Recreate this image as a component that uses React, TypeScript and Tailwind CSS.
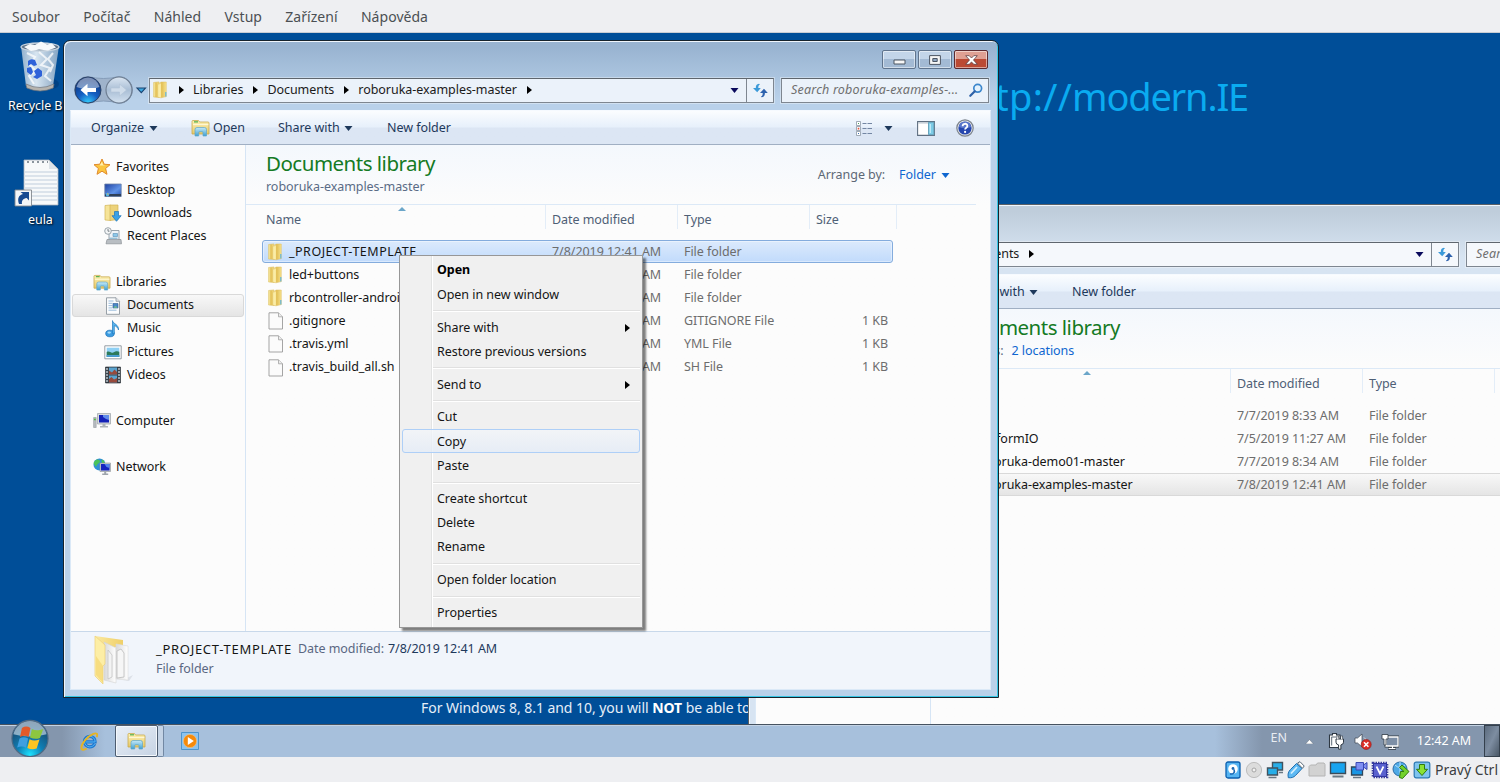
import React from "react";

type P = { className?: string };

const FolderIcon = ({ className = "w-[18px] h-[18px]" }: P) => (
  <svg viewBox="0 0 18 18" className={"shrink-0 " + className}>
    <defs>
      <linearGradient id="fo" x1="0" x2="1">
        <stop offset="0" stopColor="#fdf3b4" />
        <stop offset=".45" stopColor="#e2bf55" />
        <stop offset="1" stopColor="#f7e28d" />
      </linearGradient>
    </defs>
    <path d="M1.500 1.500 7 .9v15.600l-5.500-.5z" fill="url(#fo)" stroke="#d9ba58" strokeWidth=".5" />
    <path d="M6 3.200 9 1h5.300v14.600L9 16.800l-3-.6z" fill="url(#fo)" stroke="#dcbd60" strokeWidth=".5" />
    <path d="M9 2.500 9 16.400l-2.500-.6V4z" fill="#fff3b0" opacity=".7" />
    <path d="M13.800 11v4.600" stroke="#62b4dc" strokeWidth="1.200" />
  </svg>
);

const LibraryIcon = ({ className = "w-[19px] h-[18px]" }: P) => (
  <svg viewBox="0 0 19 18" className={"shrink-0 " + className}>
    <defs>
      <linearGradient id="li" x1="0" y1="0" x2="0" y2="1">
        <stop offset="0" stopColor="#fdf2b6" />
        <stop offset="1" stopColor="#e6c766" />
      </linearGradient>
      <linearGradient id="lb" x1="0" y1="0" x2="0" y2="1">
        <stop offset="0" stopColor="#c5e9f7" />
        <stop offset="1" stopColor="#3fa0d2" />
      </linearGradient>
    </defs>
    <path d="M1 3.500V2.300Q1 1.500 2 1.500h5.500l1 1.500H17q1 0 1 1v11H1z" fill="url(#li)" stroke="#c9a94e" strokeWidth=".8" />
    <path d="M3 2.800h4" stroke="#4fae4a" strokeWidth="1.200" />
    <path d="M2 5.600h15.400" stroke="#fffbe0" strokeWidth=".9" />
    <path d="M4 17v-6.500Q4 8.500 6 8.500h7.500q2 0 2 2V17H12v-3.300q0-1-1-1H8.700q-1 0-1 1V17z" fill="url(#lb)" stroke="#5fa6c9" strokeWidth=".7" />
  </svg>
);

const FileIcon = () => (
  <svg viewBox="0 0 18 18" className="w-[18px] h-[18px] shrink-0">
    <path d="M2 .8h9.500L15.500 4.800V17H2z" fill="#fbfbfb" stroke="#9b9b9b" strokeWidth=".9" />
    <path d="M11.500.8v4h4" fill="#ececec" stroke="#a2a2a2" strokeWidth=".8" />
  </svg>
);

const StarIcon = () => (
  <svg viewBox="0 0 18 18" className="w-[18px] h-[18px] shrink-0">
    <path d="M9 1l2.200 5.200 5.800.5-4.400 3.800 1.400 5.800L9 13.200 4 16.300l1.400-5.800L1 6.700l5.800-.5z" fill="#fbc540" stroke="#e08a2c" strokeWidth="1" strokeLinejoin="round" />
    <path d="M9 3.800l1.200 3.200 2.600.4H6.500z" fill="#fff0b0" />
  </svg>
);

const DesktopIcon = () => (
  <svg viewBox="0 0 18 18" className="w-[18px] h-[18px] shrink-0">
    <defs>
      <linearGradient id="de" x1="0" y1="0" x2="1" y2="1">
        <stop offset="0" stopColor="#1d3fa0" />
        <stop offset=".6" stopColor="#5f92e6" />
        <stop offset="1" stopColor="#2450b0" />
      </linearGradient>
    </defs>
    <path d="M.8 3h16.400v12.500H.8z" fill="url(#de)" stroke="#6e83a6" strokeWidth=".8" />
    <path d="M1 13h16v2.300H1z" fill="#2f4057" />
    <circle cx="3.500" cy="13.600" r="1.800" fill="#4fb3e8" />
    <path d="M3 12.600h1.500v1H3z" fill="#f2a33a" />
  </svg>
);

const DownloadsIcon = () => (
  <svg viewBox="0 0 18 18" className="w-[18px] h-[18px] shrink-0">
    <path d="M1 1.500 6.500 1v15.500L1 16z" fill="#f6e498" stroke="#d3b558" strokeWidth=".7" />
    <path d="M6 1h8v14.500l-8 1z" fill="#ecd27a" stroke="#d3b558" strokeWidth=".7" />
    <path d="M10.500 7.500h4v4.200h2.700L12.500 17.300 8 11.700h2.500z" fill="#3aa0e6" stroke="#1c74b8" strokeWidth=".7" />
  </svg>
);

const RecentIcon = () => (
  <svg viewBox="0 0 18 18" className="w-[18px] h-[18px] shrink-0">
    <path d="M5 3.500h10v10H5z" fill="#eef3f7" stroke="#8f9aa3" strokeWidth=".9" />
    <path d="M9 6.500h4.500v3H9z" fill="#8cc8ea" stroke="#5a90b5" strokeWidth=".6" />
    <path d="M3 12.500h14l.5 4.300H2z" fill="#b9bec3" stroke="#8b9196" strokeWidth=".7" />
    <path d="M5.500 11.200h8" stroke="#6fa8c9" strokeWidth="1" />
    <circle cx="4" cy="4" r="3.300" fill="#f4f6f7" stroke="#929ca4" strokeWidth=".9" />
    <path d="M4 2v2.200h1.500" stroke="#5b666e" strokeWidth=".8" fill="none" />
  </svg>
);

const DocumentsIcon = () => (
  <svg viewBox="0 0 18 18" className="w-[18px] h-[18px] shrink-0">
    <path d="M2.500.8h9.500l3.500 3.500v13h-13z" fill="#fbfcfd" stroke="#8d969e" strokeWidth=".9" />
    <path d="M12 .8v3.500h3.500" fill="#e2e8ec" stroke="#8d969e" strokeWidth=".8" />
    <path d="M4.500 4h5M4.500 6.300h4M4.500 8.600h4M4.500 10.900h4M4.500 13.200h8" stroke="#8fb4d8" strokeWidth=".9" />
    <path d="M9 6.500h5V11H9z" fill="#4b87c7" stroke="#2d5b94" strokeWidth=".6" />
    <path d="M9.300 10.800l2-2 2.500 2z" fill="#6fc08a" />
  </svg>
);

const MusicIcon = () => (
  <svg viewBox="0 0 18 18" className="w-[18px] h-[18px] shrink-0">
    <ellipse cx="6" cy="13.500" rx="4.300" ry="3.300" fill="#3b9be0" stroke="#1a6fb4" strokeWidth=".7" />
    <path d="M8.500.6c.4 3.400 6.500 3.600 6 9.400-.6-2.600-2.500-4-4.200-4.300v8H8.500z" fill="#58b4ee" stroke="#1f78bd" strokeWidth=".7" />
    <ellipse cx="5.200" cy="12.600" rx="1.800" ry="1.100" fill="#a5dafa" />
  </svg>
);

const PicturesIcon = () => (
  <svg viewBox="0 0 18 18" className="w-[18px] h-[18px] shrink-0">
    <path d="M.8 2.800h16.400v13H.8z" fill="#fff" stroke="#8b949c" strokeWidth=".9" />
    <path d="M2.700 4.700h12.600v9.200H2.700z" fill="#8ed0f4" />
    <path d="M2.700 9c3-1.500 4 1.500 6.500.4s4-1.800 6.100-.6v5.100H2.700z" fill="#2c7a5b" />
    <path d="M2.700 12h12.600v1.900H2.700z" fill="#4b9fd6" />
  </svg>
);

const VideosIcon = () => (
  <svg viewBox="0 0 18 18" className="w-[18px] h-[18px] shrink-0">
    <path d="M1.500 1h15v16h-15z" fill="#39424b" stroke="#20262c" strokeWidth=".6" />
    <path d="M5 1.500h8v7H5zM5 9.500h8v7H5z" fill="#5aa4d0" />
    <path d="M5 4.500l3 2 2.500-3 2.500 2.500v2.500H5zM5 13l2.500-2 2.500 2.500 3-1.500v4.500H5z" fill="#974a3c" />
    <path d="M2.200 3h1.600M2.200 6h1.600M2.200 9h1.600M2.200 12h1.600M2.200 15h1.600M14.200 3h1.600M14.200 6h1.600M14.200 9h1.600M14.200 12h1.600M14.200 15h1.600" stroke="#d9e3ea" strokeWidth="1.300" />
  </svg>
);

const ComputerIcon = () => (
  <svg viewBox="0 0 18 18" className="w-[18px] h-[18px] shrink-0">
    <path d="M.6 5.500h2.600v10H.6z" fill="#b7bcc0" stroke="#888e94" strokeWidth=".5" />
    <path d="M1 7.500h1.800" stroke="#4dbd3f" strokeWidth="1.300" />
    <path d="M4.500 1.500h13V12h-13z" fill="#d8dbde" stroke="#9aa0a6" strokeWidth=".7" />
    <path d="M6 3h10v7.500H6z" fill="#1421b8" />
    <path d="M10 3h6v5l-3-1-3-2z" fill="#5f8bea" />
    <path d="M9.500 12h3v2h2.500v1.400H7V14h2.500z" fill="#aeb3b8" />
  </svg>
);

const NetworkIcon = () => (
  <svg viewBox="0 0 18 18" className="w-[18px] h-[18px] shrink-0">
    <circle cx="6.500" cy="6.500" r="6" fill="#2f8fd8" />
    <path d="M3 2c2-1 4 0 4 1.500S4 6 3.500 8 1.500 7 .8 5.800 1.800 2.800 3 2zM8.500 1.500c2 .4 3 2 3.500 3.500l-3 1z" fill="#49c35a" />
    <path d="M7 5h10.500v8.500H7z" fill="#c9cdd2" stroke="#8a9096" strokeWidth=".6" />
    <path d="M8 6h8.500v6.500H8z" fill="#1523c0" />
    <path d="M11.500 6h5v4l-3-1z" fill="#5584ea" />
    <path d="M11.200 13.500h2v2h2v1.500h-6v-1.500h2z" fill="#9fa5ab" />
  </svg>
);

const Down = ({ className = "text-[#1e395b]" }: P) => (
  <svg viewBox="0 0 8 5" className={"w-[9px] h-[5px] shrink-0 " + className}>
    <path d="M0 0h8L4 5z" fill="currentColor" />
  </svg>
);

const Right = ({ className = "text-black" }: P) => (
  <svg viewBox="0 0 5 8" className={"w-[5px] h-[8px] shrink-0 " + className}>
    <path d="M0 0v8l5-4z" fill="currentColor" />
  </svg>
);

const BackForward = () => (
  <svg viewBox="0 0 76 32" className="w-[76px] h-[32px] shrink-0">
    <defs>
      <radialGradient id="bk" cx=".5" cy="1" r=".9">
        <stop offset="0" stopColor="#37d2ff" />
        <stop offset=".45" stopColor="#1560c4" />
        <stop offset="1" stopColor="#10357c" />
      </radialGradient>
      <linearGradient id="fw" x1="0" y1="0" x2="0" y2="1">
        <stop offset="0" stopColor="#dbe6f2" />
        <stop offset=".5" stopColor="#a9bed5" />
        <stop offset="1" stopColor="#d3e1f0" />
      </linearGradient>
    </defs>
    <path d="M16 2.500q15.500 4 31 0a13.500 13.500 0 0 1 0 27q-15.500-5-31 0a13.500 13.500 0 0 1 0-27z" fill="#9fb3cb" stroke="#8199b5" strokeWidth=".9" />
    <circle cx="16" cy="16" r="13" fill="url(#bk)" stroke="#2a4166" strokeWidth="1" />
    <path d="M4.500 13a11.700 11.700 0 0 1 23 0q-11 4.500-23 0z" fill="#fff" opacity=".45" />
    <path d="M8.500 16l7-6.200v4.200H24v4h-8.500v4.200z" fill="#fff" />
    <circle cx="47" cy="16" r="13" fill="url(#fw)" stroke="#6f7f93" strokeWidth="1.200" />
    <path d="M54.500 16l-7-6v4H39v4h8.500v4z" fill="#cfdcea" stroke="#b2c3d6" strokeWidth=".6" />
    <path d="M65 14h8.500l-4.200 4.700z" fill="#3ba7e0" stroke="#1b426f" strokeWidth="1.100" />
  </svg>
);

const RefreshIcon = () => (
  <svg viewBox="0 0 17 15" className="w-[17px] h-[15px]">
    <path d="M7 .8C4.500 1 3.800 2.500 3.800 5H1l4.200 4.300L8.800 5H6.300c0-1.800.2-3 1.700-3.600z" fill="#3b9ad9" />
    <path d="M9.500 14.200c2.700-.2 3.400-1.700 3.400-4.200h2.900L12 5.700 8 10h2.700c0 1.800-.2 3-1.700 3.600z" fill="#2d62ae" />
  </svg>
);

const SearchIcon = () => (
  <svg viewBox="0 0 14 14" className="w-[14px] h-[14px] shrink-0">
    <circle cx="8.700" cy="5.300" r="3.900" fill="#e4f2fd" stroke="#3d87cc" strokeWidth="1.700" />
    <path d="M5.800 8.300L1.300 12.800" stroke="#2f62a8" strokeWidth="2.200" strokeLinecap="round" />
  </svg>
);

const ViewIcon = () => (
  <svg viewBox="0 0 17 15" className="w-[17px] h-[15px] shrink-0">
    <path d="M.5.500h4v4h-4zM.5 5.500h4v4h-4zM.5 10.500h4v4h-4z" fill="#fff" stroke="#8c98a6" strokeWidth=".8" />
    <path d="M2 2h1v1H2z" fill="#4d9d5c" />
    <path d="M1.700 6.800h1.600v1.600H1.700z" fill="#e2523c" />
    <path d="M2 12h1v1H2z" fill="#3b70b5" />
    <path d="M6.500 2.500h4M11.500 2.500h4.500M6.500 7.500h4M11.500 7.500h4.500M6.500 12.500h4M11.500 12.500h4.500" stroke="#7386a3" strokeWidth="1.200" />
  </svg>
);

const PreviewIcon = () => (
  <svg viewBox="0 0 18 15" className="w-[18px] h-[15px] shrink-0">
    <path d="M.6.600h16.800v13.800H.6z" fill="#fff" stroke="#5f6f81" strokeWidth="1.100" />
    <path d="M1 2h11" stroke="#b7c3cf" strokeWidth="1" />
    <path d="M11.500 1.300h5.300v12.400h-5.300z" fill="#7ccbe6" stroke="#5d9db8" strokeWidth=".9" />
    <path d="M13.300 3v9" stroke="#c6edf9" strokeWidth="1.200" />
  </svg>
);

const HelpIcon = () => (
  <svg viewBox="0 0 18 18" className="w-[18px] h-[18px] shrink-0">
    <circle cx="9" cy="9" r="8.200" fill="#dfe3e8" stroke="#7d848d" strokeWidth="1.200" />
    <circle cx="9" cy="9" r="6.600" fill="#2546ae" />
    <path d="M2.800 8a6.300 6.300 0 0 1 12.400 0q-6 2.500-12.400 0z" fill="#7b94dd" opacity=".6" />
    <path d="M6.600 7.200C6.600 4 11.400 4 11.400 7c0 1.800-2.300 1.700-2.300 3.600" fill="none" stroke="#fff" strokeWidth="1.800" />
    <circle cx="9.100" cy="12.900" r="1.100" fill="#fff" />
  </svg>
);

const BigFolder = () => (
  <svg viewBox="0 0 40 52" className="w-[40px] h-[52px] shrink-0">
    <defs>
      <linearGradient id="bf" x1="0" x2="1">
        <stop offset="0" stopColor="#fbe9a0" />
        <stop offset="1" stopColor="#efcf68" />
      </linearGradient>
      <linearGradient id="pp" x1="0" x2="1">
        <stop offset="0" stopColor="#d8d8d8" />
        <stop offset="1" stopColor="#ffffff" />
      </linearGradient>
    </defs>
    <path d="M30 46l10-5-4 6z" fill="#c9cdd6" opacity=".5" />
    <path d="M2 2l28 4v8L12 12z" fill="url(#bf)" />
    <path d="M11 8l12 6v35l-12-3z" fill="url(#pp)" stroke="#d3d3d3" strokeWidth=".6" />
    <path d="M23 10l12 2v34l-12-1z" fill="url(#pp)" stroke="#dadada" strokeWidth=".6" />
    <path d="M24 17l4-2 3 4v24l-7 1z" fill="#f6f6f6" stroke="#bdbdbd" strokeWidth=".8" />
    <path d="M15 16l4 5v22l-4 2z" fill="#f3f3f3" stroke="#c4c4c4" strokeWidth=".8" />
    <path d="M2 2l10 9v19l-2 2v18L2 42z" fill="#fdeea5" stroke="#ecd07a" strokeWidth=".7" />
    <path d="M3 22l7 10v17L3 41z" fill="#f3d571" opacity=".7" />
  </svg>
);

const navRows: (null | { t: string; I: () => React.ReactElement; sub?: boolean; on?: boolean })[] = [
  { t: "Favorites", I: StarIcon },
  { t: "Desktop", I: DesktopIcon, sub: true },
  { t: "Downloads", I: DownloadsIcon, sub: true },
  { t: "Recent Places", I: RecentIcon, sub: true },
  null,
  { t: "Libraries", I: () => <LibraryIcon className="w-[18px] h-[17px]" /> },
  { t: "Documents", I: DocumentsIcon, sub: true, on: true },
  { t: "Music", I: MusicIcon, sub: true },
  { t: "Pictures", I: PicturesIcon, sub: true },
  { t: "Videos", I: VideosIcon, sub: true },
  null,
  { t: "Computer", I: ComputerIcon },
  null,
  { t: "Network", I: NetworkIcon },
];

type Row = { name: string; date: string; type: string; size?: string; file?: boolean; sel?: boolean };

const frontRows: Row[] = [
  { name: "_PROJECT-TEMPLATE", date: "7/8/2019 12:41 AM", type: "File folder", sel: true },
  { name: "led+buttons", date: "7/8/2019 12:41 AM", type: "File folder" },
  { name: "rbcontroller-android", date: "7/8/2019 12:41 AM", type: "File folder" },
  { name: ".gitignore", date: "7/8/2019 12:41 AM", type: "GITIGNORE File", size: "1 KB", file: true },
  { name: ".travis.yml", date: "7/8/2019 12:41 AM", type: "YML File", size: "1 KB", file: true },
  { name: ".travis_build_all.sh", date: "7/8/2019 12:41 AM", type: "SH File", size: "1 KB", file: true },
];

const backRows: Row[] = [
  { name: "", date: "7/7/2019 8:33 AM", type: "File folder" },
  { name: "PlatformIO", date: "7/5/2019 11:27 AM", type: "File folder" },
  { name: "roboruka-demo01-master", date: "7/7/2019 8:34 AM", type: "File folder" },
  { name: "roboruka-examples-master", date: "7/8/2019 12:41 AM", type: "File folder", sel: true },
];

function CaptionButtons() {
  const base = "h-[19px] w-[34px] rounded-[2px] border flex items-center justify-center shadow-[inset_0_0_0_1px_rgba(255,255,255,0.5)] ";
  return (
    <div className="flex gap-[2px] justify-end pr-[10px] pt-[9px]">
      <div className={base + "border-[#60748d] bg-linear-to-b from-[#c3d5e9] from-45% to-[#a3bad4] to-50%"}>
        <svg viewBox="0 0 13 6" className="w-[13px] h-[6px] mt-[4px]">
          <path d="M1 1h11v4H1z" fill="#f7f7f7" stroke="#4d5663" />
        </svg>
      </div>
      <div className={base + "border-[#60748d] bg-linear-to-b from-[#c3d5e9] from-45% to-[#a3bad4] to-50%"}>
        <svg viewBox="0 0 12 10" className="w-[12px] h-[10px]">
          <path d="M.6.600h10.800v8.800H.6z" fill="#f7f7f7" stroke="#4d5663" />
          <path d="M3.800 3.500h4.400v3H3.800z" fill="#8fa7c4" stroke="#4d5663" />
        </svg>
      </div>
      <div className={base + "border-[#5c2a30] bg-linear-to-b from-[#dfa093] from-45% to-[#bb4a34] to-50%"}>
        <svg viewBox="0 0 13 10" className="w-[13px] h-[10px]">
          <path d="M.7.700h3.500l2.300 2.300L8.800.700h3.500L8.500 5l3.800 4.300H8.800L6.500 7 4.200 9.300H.7L4.500 5z" fill="#fff" stroke="#5d4148" strokeWidth=".8" />
        </svg>
      </div>
    </div>
  );
}

function Explorer({ active, path, rows }: { active: boolean; path: string[]; rows: Row[] }) {
  const last = path[path.length - 1];
  return (
    <div
      className={
        "w-[936px] h-[658px] rounded-t-[7px] border flex flex-col overflow-hidden " +
        (active
          ? "border-[#16232c] shadow-[inset_1px_1px_0_#f0f6fc,inset_-1px_-1px_0_#35c5e4] bg-linear-to-b from-[#99b4d1] from-1% to-[#b9d1ea] to-9%"
          : "border-[#5a6066] shadow-[inset_1px_1px_0_#f0f6fc] bg-linear-to-b from-[#bfcddb] from-1% to-[#d7e4f2] to-8%")
      }
    >
      <div className="h-[29px] shrink-0">{active && <CaptionButtons />}</div>
      <div className="h-[40px] shrink-0 flex items-center pl-[8px] pr-[9px]">
        <div className="w-[77px] shrink-0 flex">{active && <BackForward />}</div>
        <div
          className={
            "w-[625px] h-[25px] shrink-0 border border-[#7e8690] border-t-[#5f666e] flex items-center shadow-[0_0_0_1px_rgba(255,255,255,0.35)] " +
            (active ? "bg-[#ebf2fa]" : "bg-[#f5f8fc]")
          }
        >
          <div className="pl-[2px] w-[29px]"><FolderIcon /></div>
          <Right />
          {path.map((p) => (
            <React.Fragment key={p}>
              <span className="ml-[9px] mr-[10px] text-[#1b1b1b]">{p}</span>
              <Right />
            </React.Fragment>
          ))}
          <div className="flex-1" />
          <Down className="text-[#0a0a5c] mr-[7px]" />
          <div className="w-[27px] h-full border-l border-[#7e8690] flex items-center justify-center">
            <RefreshIcon />
          </div>
        </div>
        <div
          className={
            "ml-[7px] flex-1 h-[25px] border border-[#7e8690] border-t-[#5f666e] flex items-center pl-[9px] pr-[5px] shadow-[0_0_0_1px_rgba(255,255,255,0.35)] " +
            (active ? "bg-[#ebf2fa]" : "bg-[#f5f8fc]")
          }
        >
          <span className="flex-1 italic tracking-[0.200px] text-[#6f6f6f]">{active ? "Search roboruka-examples-..." : "Search Documents"}</span>
          <SearchIcon />
        </div>
      </div>
      <div className="ml-[6px] mr-[7px] mb-[7px] flex-1 flex flex-col bg-[#fcfcfc] border border-[#dbe9f7] border-t-[#f6faff] min-h-0">
        <div className="h-[34px] pt-px shrink-0 border-b border-[#a0afc3] bg-linear-to-b from-[#fbfdff] via-[#e7f0fb] via-48% to-[#dce6f4] to-52% flex items-center text-[#1e395b] pl-[20px] pr-[16px]">
          <span className="w-[58px] shrink-0">Organize</span>
          <Down />
          <div className="ml-[33px] shrink-0"><LibraryIcon /></div>
          <span className="ml-[3px] w-[65px] shrink-0">Open</span>
          <span className="w-[66px] shrink-0">Share with</span>
          <Down />
          <span className="ml-[34px]">New folder</span>
          <div className="flex-1" />
          <ViewIcon />
          <Down className="ml-[11px] text-[#1e395b]" />
          <div className="w-[24px]" />
          <PreviewIcon />
          <div className="w-[21px]" />
          <HelpIcon />
        </div>
        <div className="flex flex-1 min-h-0">
          <div className="w-[175px] shrink-0 border-r border-[#d6e5f5] pt-[10.500px] text-[#151515]">
            {navRows.map((r, i) =>
              r ? (
                <div
                  key={i}
                  className={
                    "h-[23.100px] flex items-center gap-[5px] ml-[1px] mr-[1px] rounded-[3px] border " +
                    (r.sub ? "pl-[31px] " : "pl-[20px] ") +
                    (r.on ? "border-[#d9d9d9] bg-linear-to-b from-[#f8f8f8] to-[#e5e5e5]" : "border-transparent")
                  }
                >
                  <r.I />
                  <span>{r.t}</span>
                </div>
              ) : (
                <div key={i} className="h-[23.100px]" />
              )
            )}
          </div>
          <div className="flex-1 flex flex-col bg-linear-to-b from-[#f4f8fd] to-[#fcfcfc] to-[60px]">
            <div className="h-[59px] flex justify-between pl-[20px] pr-[40px]">
              <div>
                <div className="text-[20.500px] leading-[28px] tracking-[-0.5px] mt-[4px] text-[#147a24]">Documents library</div>
                {active ? (
                  <div className="leading-[19px] text-[#5a6c86]">{last}</div>
                ) : (
                  <div className="leading-[19px] text-[#5a6c86]">
                    Includes:<span className="ml-[8px] text-[#0f66d0]">2 locations</span>
                  </div>
                )}
              </div>
              <div className="flex items-center text-[#5d6876] pt-[1px]">
                Arrange by:<span className="ml-[14px] mr-[5px] text-[#0f66d0]">Folder</span>
                <Down className="text-[#0f66d0]" />
              </div>
            </div>
            <div className="h-[25px] mr-[14px] border-t border-[#dce9f7] flex text-[#4f6076]">
              <div className="w-[300px] pl-[20px] flex items-center pt-[6px] relative border-r border-[#e3edf8]">
                Name
                <svg viewBox="0 0 8 4" className="absolute left-[152px] top-[2px] w-[8px] h-[4px]">
                  <path d="M0 4L4 0l4 4z" fill="#6ba6c9" />
                </svg>
              </div>
              <div className="w-[132px] pl-[6px] flex items-center pt-[6px] border-r border-[#e3edf8]">Date modified</div>
              <div className="w-[132px] pl-[6px] flex items-center pt-[6px] border-r border-[#e3edf8]">Type</div>
              <div className="w-[87px] pl-[6px] flex items-center pt-[6px] border-r border-[#e3edf8]">Size</div>
            </div>
            <div className="pt-[11px] pl-[16px]">
              {rows.map((r, i) => (
                <div
                  key={i}
                  className={
                    "w-[631px] h-[23.100px] flex items-center border rounded-[3px] pl-[4px] pt-px text-[#6d6d6d] " +
                    (r.sel
                      ? active
                        ? "border-[#84acdd] bg-linear-to-b from-[#dceafc] to-[#c1dbfc] shadow-[inset_0_0_0_1px_rgba(255,255,255,0.4)]"
                        : "border-[#d9d9d9] bg-linear-to-b from-[#f8f8f8] to-[#e5e5e5]"
                      : "border-transparent")
                  }
                >
                  {r.file ? <FileIcon /> : <FolderIcon />}
                  <span className={"ml-[4px] w-[263px] text-[#151515] " + (r.name[0] === "_" ? "tracking-[0.500px]" : "")}>{r.name}</span>
                  <span className="w-[132px]">{r.date}</span>
                  <span className="w-[132px]">{r.type}</span>
                  <span className="w-[72px] text-right">{r.size}</span>
                </div>
              ))}
            </div>
          </div>
        </div>
        {active && (
          <div className="h-[58px] shrink-0 border-t border-[#c8d8ea] bg-[#f1f5fb] flex pl-[22px] pt-[2px]">
            <BigFolder />
            <div className="ml-[23px] pt-[5px] leading-[20px]">
              <div className="flex">
                <span className="text-[#151515] text-[13px] tracking-[0.700px] w-[142px]">_PROJECT-TEMPLATE</span>
                <span className="text-[#5a6782] w-[90px]">Date modified:</span>
                <span className="text-[#1e395b]">7/8/2019 12:41 AM</span>
              </div>
              <div className="text-[#5a6782]">File folder</div>
            </div>
          </div>
        )}
      </div>
    </div>
  );
}

const menu: (string | null)[] = [
  "Open", "Open in new window", null, "Share with", "Restore previous versions", null, "Send to", null,
  "Cut", "Copy", "Paste", null, "Create shortcut", "Delete", "Rename", null, "Open folder location", null, "Properties",
];

function ContextMenu() {
  return (
    <div className="w-[244px] h-[373px] bg-[#f0f0f0] border border-[#979797] p-[2px] shadow-[3px_3px_2px_rgba(0,0,0,0.5)] bg-[linear-gradient(90deg,transparent_31px,#e2e3e3_31px,#e2e3e3_32px,#fff_32px,#fff_33px,transparent_33px)]">
      {menu.map((m, i) =>
        m ? (
          <div
            key={i}
            className={
              "h-[24.200px] flex items-center justify-between pl-[34px] pr-[9px] pt-[1.200px] border rounded-[3px] text-[#151515] " +
              (m === "Copy" ? "border-[#aecff7] bg-linear-to-b from-[#f2f5f9]/80 to-[#e4ecf7]/80" : "border-transparent")
            }
          >
            <span className={m === "Open" ? "font-bold text-black" : ""}>{m}</span>
            {(m === "Share with" || m === "Send to") && <Right />}
          </div>
        ) : (
          <div key={i} className="h-[8.700px] pt-[4px] pl-[31px]">
            <div className="h-[2px] border-t border-[#e0e0e0] bg-white" />
          </div>
        )
      )}
    </div>
  );
}

const RecycleBin = () => (
  <svg viewBox="0 0 42 52" className="w-[42px] h-[52px]">
    <defs>
      <linearGradient id="rb" x1="0" x2="1">
        <stop offset="0" stopColor="#9fb9d2" />
        <stop offset=".4" stopColor="#eaf2f8" />
        <stop offset="1" stopColor="#8eabc7" />
      </linearGradient>
    </defs>
    <ellipse cx="32" cy="43" rx="8" ry="5" fill="#002a5c" opacity=".35" />
    <path d="M2 5l5 40q14 7 27 0l6-40z" fill="url(#rb)" opacity=".92" />
    <ellipse cx="21" cy="6" rx="19" ry="4" fill="#5d7288" stroke="#c7d3de" strokeWidth="1.300" />
    <path d="M5 6l6-3 5 1 6-3.500 6 3 5-1 4 4-8 3-9-1-8 1.500z" fill="#f6f9fb" />
    <path d="M8 12l8 4-5 8 6 6-7 5 5 8M20 11l8 7-6 6 9 3-5 8 6 5M34 12l-5 6 5 6-3 7" stroke="#fff" strokeWidth="2" fill="none" opacity=".75" />
    <path d="M9 20q3-3 7-1l2 5-3 1-3-2-3 2zM8 27l4-1 2 5-2 3-4-3zM15 30l4-3 4 3v5l-5 3-4-2 3-2z" fill="#2f62d9" />
    <path d="M7 43q14 7 28 0l-.8 4q-13 6-26.400 0z" fill="#b7b4ae" stroke="#71767c" strokeWidth=".7" />
  </svg>
);

const EulaIcon = () => (
  <svg viewBox="0 0 46 50" className="w-[46px] h-[50px]">
    <path d="M10 2h25l9 9v36H10z" fill="#f7f9fa" stroke="#a9b3bc" strokeWidth=".8" />
    <path d="M35 2v9h9z" fill="#59636d" />
    <path d="M35 2l9 9h-9z" fill="#dde3e8" />
    <path d="M11 14h32M11 18h32M11 22h32M11 26h32M11 30h32M11 34h32M11 38h32M11 42h32" stroke="#c0cedb" strokeWidth="1.200" />
    <path d="M13 4h2M18 4h2M23 4h2M28 4h2M33 4h1" stroke="#8b959e" strokeWidth="1.800" />
    <path d="M1 32h16.500v16H1z" fill="#f4f6f8" stroke="#83898f" strokeWidth=".9" />
    <path d="M5 46c-2-6 0-9 4-10l-2.500-2H15v8.500l-2.300-2.500C9 40.500 7.500 42.500 8 46z" fill="#174a92" />
  </svg>
);

const Orb = () => (
  <svg viewBox="0 0 42 40" className="w-[42px] h-[38px]">
    <defs>
      <radialGradient id="ob" cx=".5" cy=".95" r=".9">
        <stop offset="0" stopColor="#1de3ff" />
        <stop offset=".4" stopColor="#0f7fb5" />
        <stop offset="1" stopColor="#1d3f62" />
      </radialGradient>
    </defs>
    <circle cx="21" cy="20.500" r="19" fill="url(#ob)" stroke="#4f6a84" strokeWidth="1.200" />
    <path d="M3.500 16A18 18 0 0 1 38.500 16Q21 21 3.500 16z" fill="#dcebf5" opacity=".6" />
    <path d="M12.500 9.500c3-2 6-2 9 0l-2 9.500c-3-1.700-5.500-1.700-9 0z" fill="#e25a2a" />
    <path d="M23 10.500c3.500 1.800 7 1.800 12 0l-3.500 9.500c-4 1.500-7 1-10.500-.5z" fill="#8dc63f" />
    <path d="M10 20.500c3-1.700 5.800-1.700 9 0l-2.200 9.800c-3-1.700-6-1.700-9.300-.2z" fill="#3f9fe0" />
    <path d="M20.500 21.300c3.500 1.700 6.500 1.700 10.500.2l-3 9.500c-3.500 1.300-6.500 1-9.800-.5z" fill="#fcc422" />
  </svg>
);

const IeIcon = () => (
  <svg viewBox="0 0 20 20" className="w-[19px] h-[19px]">
    <path d="M15.500 12.500c-1 2-3 3.200-5.300 3.200A5.600 5.600 0 1 1 15.900 10.500H6" fill="none" stroke="#1c78d2" strokeWidth="3.400" />
    <path d="M15.500 12.500c-1 2-3 3.200-5.300 3.200A5.600 5.600 0 1 1 15.900 10.500H6" fill="none" stroke="#58b8f4" strokeWidth="1" />
    <path d="M17.500 5.500C19 2 17.500.5 14 2 8 4.600 1.500 12 1.500 16.500c0 3 3 2.500 5.500.8" fill="none" stroke="#e6b422" strokeWidth="2" />
  </svg>
);

function Taskbar() {
  return (
    <div className="h-[33px] shrink-0 relative border-t border-[#465260] shadow-[inset_0_1px_0_#c4d3e4] bg-[linear-gradient(90deg,#8496ad_0,#8496ad_62px,#a7c0dc_105px,#a7c0dc_1215px,#8496ad_1262px,#8496ad_100%)] flex items-center">
      <div className="absolute left-[9px] top-[-6px]"><Orb /></div>
      <div className="w-[115px] flex justify-end pr-[16px]"><IeIcon /></div>
      <div className="w-[43px] h-[32px] rounded-[2px] border border-[#4d5c70] bg-linear-to-br from-[#e9eff7] to-[#c6d3e4] shadow-[inset_0_0_0_1px_#f4f8fc] flex items-center justify-center">
        <LibraryIcon />
      </div>
      <div className="w-[6px] h-[32px] border border-l-0 border-[#7288a3] rounded-r-[2px] bg-[#c4d3e5]" />
      <svg viewBox="0 0 18 18" className="ml-[17px] w-[18px] h-[18px]">
        <path d="M.5.500h17v17H.5z" fill="#8cc3ee" stroke="#4e94cc" />
        <circle cx="9" cy="9" r="6.600" fill="#f58a0b" stroke="#fbc27b" strokeWidth=".6" />
        <path d="M6.800 5v8l6-4z" fill="#fff" />
      </svg>
      <div className="flex-1" />
      <div className="flex items-center text-white h-full">
        <span className="mb-[5px] text-[12.500px] text-[#e8edf3]">EN</span>
        <svg viewBox="0 0 9 5" className="ml-[18px] w-[9px] h-[5px] mt-[1px]"><path d="M.5 5L4.500.500l4 4.500z" fill="#fff" stroke="#5c6a7a" strokeWidth=".5" /></svg>
        <svg viewBox="0 0 17 18" className="ml-[14px] w-[17px] h-[18px]">
          <path d="M1.500 3h3V1.500h4V3H12v12.500H1.500z" fill="#fff" stroke="#2e3843" strokeWidth="1.100" />
          <path d="M3.500 5h5M3.700 5v8.500" stroke="#5d6975" fill="none" />
          <path d="M8 7h7.500v3.200q0 2.300-2.600 2.700v4.300h-2.300v-4.300Q8 12.500 8 10.200z" fill="#fff" stroke="#2e3843" />
          <path d="M9.800 3.800v3M13.700 3.800v3" stroke="#2e3843" strokeWidth="2.400" />
          <path d="M9.800 4.200v3M13.700 4.200v3" stroke="#fff" strokeWidth="1.200" />
        </svg>
        <svg viewBox="0 0 18 17" className="ml-[9px] w-[18px] h-[17px]">
          <path d="M1 5h2.500L8 1v13l-4.500-4H1z" fill="#fff" stroke="#39444f" strokeWidth=".7" />
          <path d="M10 4.500q1.500 1 1.500 2.500" stroke="#dfe5eb" fill="none" />
          <circle cx="12.200" cy="11.500" r="5" fill="#db2e27" stroke="#8d1a16" strokeWidth=".6" />
          <path d="M10 9.300l4.400 4.400M14.400 9.300L10 13.700" stroke="#fff" strokeWidth="1.600" />
        </svg>
        <svg viewBox="0 0 18 17" className="ml-[9px] w-[18px] h-[17px]">
          <path d="M5 4h12v9H5z" fill="#7d8fa6" stroke="#2f3943" strokeWidth="2.800" />
          <path d="M7 15.500h8M11.500 13v2.500" stroke="#2f3943" strokeWidth="2.600" />
          <path d="M5 4h12v9H5z" fill="#7d8fa6" stroke="#fff" strokeWidth="1.300" />
          <path d="M7.500 15.500h7M11.500 13v2.500" stroke="#fff" strokeWidth="1.200" />
          <path d="M1 1.500h6v4.500H5v6H3v-6H1z" fill="#fff" stroke="#2f3943" strokeWidth=".8" />
        </svg>
        <span className="ml-[18px] mr-[13px]">12:42 AM</span>
        <div className="w-[16px] h-full border border-[#34404d] bg-linear-to-br from-[#5c6c7f] via-[#7d8da1] to-[#4a5867]" />
      </div>
    </div>
  );
}

function StatusBar() {
  return (
    <div className="flex-1 flex items-center justify-end gap-[3px] pr-[2px] text-[#3b3e41] text-[14px] tracking-normal">
      <svg viewBox="0 0 18 18" className="w-[18px] h-[18px]">
        <rect x="2" y="1" width="14" height="16" rx="2" fill="#55b4f2" stroke="#0b5fae" strokeWidth="1.300" />
        <circle cx="9" cy="8" r="4.800" fill="#fff" />
        <path d="M6 13c4 .5 5-2 4-4.500" stroke="#1a68b4" strokeWidth="1.600" fill="none" />
        <circle cx="9" cy="7.500" r="1.400" fill="#1a68b4" />
      </svg>
      <svg viewBox="0 0 18 18" className="w-[18px] h-[18px]">
        <circle cx="9" cy="9" r="7.600" fill="#dcdcdc" stroke="#bdbdbd" />
        <circle cx="9" cy="9" r="2" fill="#f1f1f1" stroke="#a5a5a5" />
      </svg>
      <svg viewBox="0 0 18 18" className="w-[18px] h-[18px]">
        <path d="M6.500 1.500h10v7.500h-10z" fill="#27aee8" stroke="#42535f" strokeWidth="1.400" />
        <path d="M1.500 7h10v7h-10z" fill="#27aee8" stroke="#42535f" strokeWidth="1.400" />
        <path d="M2.500 16.500h8M13 11.500h4" stroke="#6a7883" strokeWidth="1.500" />
      </svg>
      <svg viewBox="0 0 18 18" className="w-[18px] h-[18px]">
        <path d="M1.300 16.700c-.8-4 .2-6 2-8L9.500 2.500l5.500 5-6.500 7c-1.800 1.700-3.700 2.600-7.200 2.200z" fill="#5db9f3" stroke="#1f6fb0" />
        <path d="M10.500 2l2.500-1.300L17.200 5l-1.700 2.300z" fill="#fff" stroke="#5a6a78" />
        <path d="M4 12.500l6-6.500" stroke="#d5effd" strokeWidth="1.800" />
      </svg>
      <svg viewBox="0 0 18 18" className="w-[18px] h-[18px]">
        <path d="M1 15V5.500L2.500 4H8l1.500-2H16l1 1.500V15z" fill="#d2d2d2" stroke="#b4b4b4" />
      </svg>
      <svg viewBox="0 0 18 18" className="w-[18px] h-[18px]">
        <path d="M1.500 1.500h15v11h-15z" fill="#18a4ef" stroke="#3c4c59" strokeWidth="1.400" />
        <path d="M3.500 15.500h11" stroke="#6a7883" strokeWidth="2" />
      </svg>
      <svg viewBox="0 0 18 18" className="w-[18px] h-[18px]">
        <path d="M1.500 6h11v8h-11z" fill="#1996e4" stroke="#2f4658" strokeWidth="1.300" />
        <path d="M3 16.500h8" stroke="#6a7883" strokeWidth="1.500" />
        <path d="M6 1.500h7.500v7.500H6zM13.500 4l3.500-2.500v7l-3.500-2.500z" fill="#7f8ff2" stroke="#3a49b4" />
      </svg>
      <svg viewBox="0 0 18 18" className="w-[18px] h-[18px]">
        <path d="M2 2h14v14H2z" fill="none" stroke="#3b3f9f" strokeWidth="2.600" strokeDasharray="1.500 1" />
        <rect x="2.500" y="2.500" width="13" height="13" fill="#5a62cf" stroke="#3237a0" />
        <path d="M5.500 5.500L9 12.500l3.500-7" fill="none" stroke="#fff" strokeWidth="1.700" />
      </svg>
      <svg viewBox="0 0 18 18" className="w-[18px] h-[18px]">
        <circle cx="8" cy="8" r="7" fill="#4ea9e6" stroke="#2a6ba6" />
        <path d="M3 4q5 5 10 0M8 1v14" stroke="#b9e2fb" fill="none" />
        <path d="M7.500 6.500L10 4l7 6.500-6.500 7-3-1 1-6h3.500z" fill="#72d22c" stroke="#2f7a10" />
      </svg>
      <svg viewBox="0 0 18 18" className="w-[18px] h-[18px]">
        <rect x="1.200" y="1.200" width="15.600" height="15.600" rx="2" fill="#7fc4ef" stroke="#2a78b3" strokeWidth="1.200" />
        <path d="M6.500 3.500h5v4.800h3L9 14.500 3.500 8.300h3z" fill="#8ae234" stroke="#2f7a10" />
      </svg>
      <span className="ml-[1px] whitespace-nowrap">Pravý Ctrl</span>
    </div>
  );
}

export default function App() {
  return (
    <div className="w-[1500px] h-[782px] flex flex-col overflow-hidden bg-[#eeeff2] font-['Noto_Sans',sans-serif] text-[12.500px] tracking-[-0.05px] leading-none whitespace-nowrap select-none">
      <div className="h-[33px] shrink-0 border-b border-[#c9cdd3] flex items-center gap-[23.300px] pl-[12px] pt-[2px] text-[14px] tracking-[0.04px] text-[#4b4f53]">
        {["Soubor", "Počítač", "Náhled", "Vstup", "Zařízení", "Nápověda"].map((t) => (
          <span key={t}>{t}</span>
        ))}
      </div>
      <div className="h-[724px] shrink-0 flex flex-col bg-[#004e98]">
        <div className="flex-1 relative overflow-hidden">
          <div className="absolute left-[19px] top-[8px]"><RecycleBin /></div>
          <div className="absolute left-[8px] top-[67px] text-white [text-shadow:1px_1px_2px_#000]">Recycle Bin</div>
          <div className="absolute left-[14px] top-[125px]"><EulaIcon /></div>
          <div className="absolute left-[28px] top-[181px] text-white [text-shadow:1px_1px_2px_#000]">eula</div>
          <div className="absolute right-[252px] top-[44px] text-[38px] tracking-[-1.2px] text-[#0aabf0]">
            <span className="tracking-[0.300px]">http://</span>modern.IE
          </div>
          <div className="absolute left-[421px] top-[668px] text-[14px] text-[#e6eef8]">
            For Windows 8, 8.1 and 10, you will <b className="text-white">NOT</b> be able to
          </div>
          <div className="absolute left-[748px] top-[171px]">
            <Explorer active={false} path={["Libraries", "Documents"]} rows={backRows} />
          </div>
          <div className="absolute left-[63px] top-[7px]">
            <Explorer active path={["Libraries", "Documents", "roboruka-examples-master"]} rows={frontRows} />
          </div>
          <div className="absolute left-[399px] top-[222px]"><ContextMenu /></div>
        </div>
        <Taskbar />
      </div>
      <StatusBar />
    </div>
  );
}
